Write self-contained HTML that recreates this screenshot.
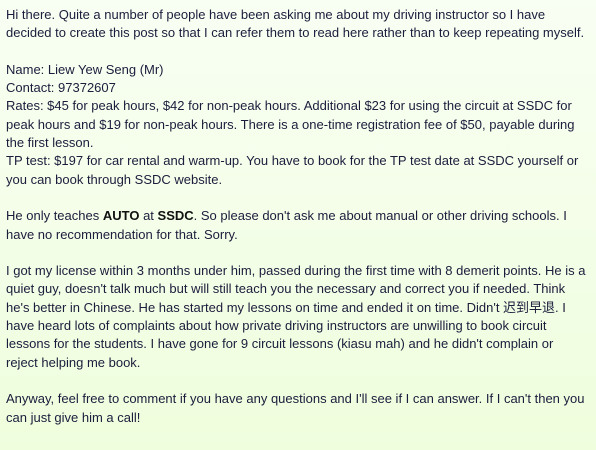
<!DOCTYPE html>
<html><head><meta charset="utf-8"><style>
html,body{margin:0;padding:0;width:596px;height:450px;overflow:hidden}
body{background:linear-gradient(#f8fff3,#effedd);}
.t{position:absolute;left:6px;top:6px;font-family:"Liberation Sans","Noto Sans CJK SC",sans-serif;font-size:13px;line-height:18.3px;color:#1c1c3c;white-space:nowrap}
b{color:#111}
</style></head><body><div class="t">
Hi there. Quite a number of people have been asking me about my driving instructor so I have<br>
decided to create this post so that I can refer them to read here rather than to keep repeating myself.<br>
<br>
Name: Liew Yew Seng (Mr)<br>
Contact: 97372607<br>
Rates: $45 for peak hours, $42 for non-peak hours. Additional $23 for using the circuit at SSDC for<br>
peak hours and $19 for non-peak hours. There is a one-time registration fee of $50, payable during<br>
the first lesson.<br>
TP test: $197 for car rental and warm-up. You have to book for the TP test date at SSDC yourself or<br>
you can book through SSDC website.<br>
<br>
He only teaches <b>AUTO</b> at <b>SSDC</b>. So please don't ask me about manual or other driving schools. I<br>
have no recommendation for that. Sorry.<br>
<br>
I got my license within 3 months under him, passed during the first time with 8 demerit points. He is a<br>
quiet guy, doesn't talk much but will still teach you the necessary and correct you if needed. Think<br>
he's better in Chinese. He has started my lessons on time and ended it on time. Didn't 迟到早退. I<br>
have heard lots of complaints about how private driving instructors are unwilling to book circuit<br>
lessons for the students. I have gone for 9 circuit lessons (kiasu mah) and he didn't complain or<br>
reject helping me book.<br>
<br>
Anyway, feel free to comment if you have any questions and I'll see if I can answer. If I can't then you<br>
can just give him a call!
</div></body></html>
